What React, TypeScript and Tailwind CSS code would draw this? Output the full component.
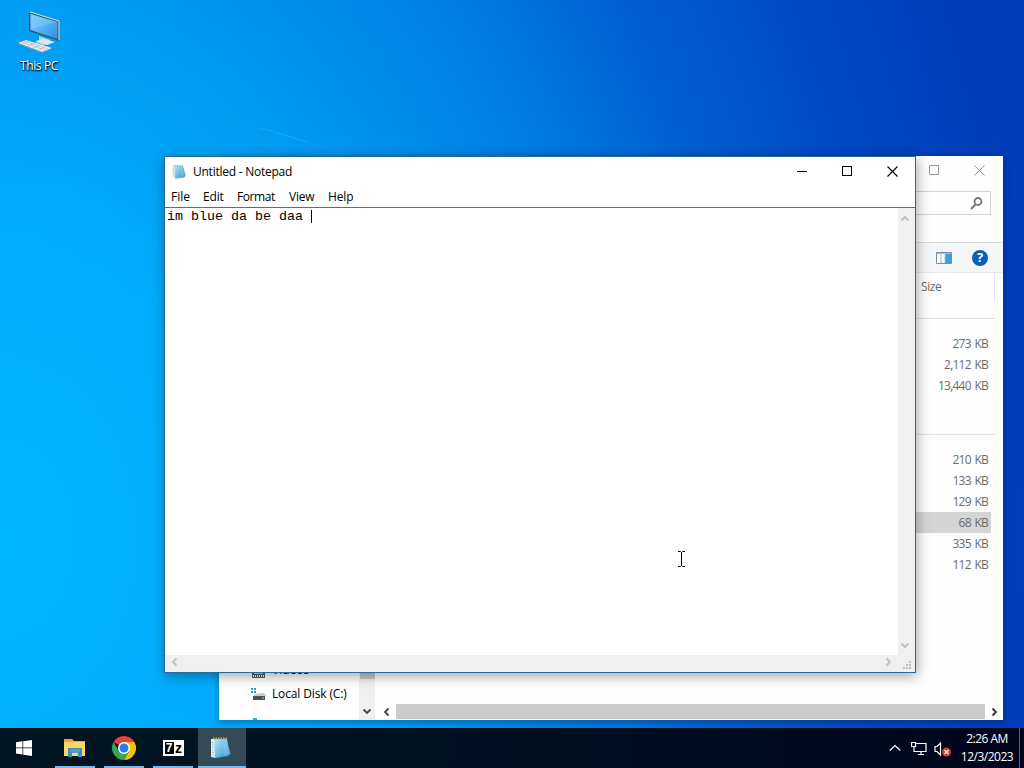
import type { ReactNode } from "react";

const recentSizes = ["273 KB", "2,112 KB", "13,440 KB"];
const olderSizes = ["210 KB", "133 KB", "129 KB", "68 KB", "335 KB", "112 KB"];

function Chevron({ dir, className }: { dir: "up" | "down" | "left" | "right"; className?: string }) {
  const paths = {
    up: "M1.5 6.5 5 3l3.5 3.5",
    down: "M1.5 3.5 5 7l3.5-3.5",
    left: "M6.5 1.5 3 5l3.5 3.5",
    right: "M3.5 1.5 7 5 3.5 8.5",
  };
  return (
    <svg viewBox="0 0 10 10" className={`size-2.5 shrink-0 ${className}`} fill="none" stroke="currentColor" strokeWidth="1.8">
      <path d={paths[dir]} />
    </svg>
  );
}

function NotepadIcon({ className }: { className: string }) {
  return (
    <svg viewBox="0 0 24 24" className={className}>
      <defs>
        <linearGradient id="pad" x1="0" y1="0" x2="1" y2="1">
          <stop offset="0" stopColor="#b5e4f6" />
          <stop offset=".55" stopColor="#68bce4" />
          <stop offset="1" stopColor="#2b83b8" />
        </linearGradient>
      </defs>
      <path d="m18 4 4 14-5 3z" fill="#3a85a8" />
      <path d="M2 3h4l1 19-5-1z" fill="#e8eeee" />
      <path d="M5 3h13l2 17-14 2z" fill="url(#pad)" />
      <path d="m13 3 5 1 3 14-6 2z" fill="#8dd0ef" opacity=".5" />
      <path d="M4 2.500h14" stroke="#c1aa61" strokeWidth="2" strokeDasharray="1.5 1" />
      <path d="m3.500 6 .5 15" stroke="#8fa5ac" strokeDasharray="1 1.5" />
    </svg>
  );
}

function ThisPc() {
  return (
    <div className="flex w-[78px] flex-col items-center pt-2.5">
      <svg viewBox="0 0 48 48" className="size-12">
        <defs>
          <linearGradient id="screen" x1="0" y1="0" x2="1" y2="1">
            <stop offset="0" stopColor="#82cdff" />
            <stop offset=".5" stopColor="#55b2f5" />
            <stop offset="1" stopColor="#2a8fe6" />
          </linearGradient>
        </defs>
        <path d="m24 26 11 4v4l-7 1-8-3 4-2z" fill="#c3d4dd" />
        <path d="m21 31 7-2 12 3-8 3z" fill="#e2e8ea" />
        <path d="M14 2 44 11v20L14 21z" fill="#34566d" />
        <path d="m15 2 29 9v19" fill="none" stroke="#d7dfe2" />
        <path d="m15.500 4 27 8v17l-27-9z" fill="url(#screen)" />
        <path d="m15.500 4 27 8-27 7z" fill="#9edaff" opacity=".28" />
        <path d="m3 33 8-3 26 8-10 4z" fill="#edf0f1" />
        <path d="m3 33 24 9 10-4v1l-10 4-24-9z" fill="#8798a2" />
        <path d="m6 32 24 8M9 31l24 8M8 34l7-3M13 36l7-3M18 38l7-3M23 40l7-3" stroke="#a8b2b7" strokeWidth=".6" />
      </svg>
      <span className="text-[12px] leading-4 tracking-[-0.35px] text-white [text-shadow:1px_1px_2px_#000,0_1px_1px_#000]">This PC</span>
    </div>
  );
}

function DriveIcon() {
  return (
    <svg viewBox="0 0 16 16" className="size-4">
      <path d="M0 2h2v2H0zm3 0h2v2H3zM0 5h2v2H0zm3 0h2v2H3z" fill="#16a6d6" />
      <path d="m4 8 9-1 2 3H3z" fill="#c4cccc" />
      <path d="M2 10h12v4H2z" fill="#4b5354" />
      <path d="M11 12h2" stroke="#7ddd75" />
    </svg>
  );
}

function SizeCell({ value }: { value: string }) {
  return (
    <div className={`flex h-[21px] w-[75px] items-center justify-end pr-[3px] text-[12px] tracking-[-0.75px] text-[#6d6d6d] [word-spacing:1.2px] ${value === "68 KB" ? "bg-[#d5d5d5]" : ""}`}>
      {value}
    </div>
  );
}

function Explorer() {
  return (
    <section className="absolute left-[219px] top-[156px] flex h-[564px] w-[784px] flex-col bg-[#fefefe] shadow-[0_2px_8px_rgba(0,0,0,0.3)]">
      <div className="ml-auto flex h-[516px] w-[87px] flex-col">
        <div className="flex h-[35px] gap-[35px] pl-[13px] pt-[9px] text-[#999]">
          <svg viewBox="0 0 10 10" className="size-2.5" fill="none" stroke="currentColor">
            <path d="M.5.5h9v9h-9z" />
          </svg>
          <svg viewBox="0 0 11 11" className="size-[11px]" fill="none" stroke="currentColor">
            <path d="m.5.5 10 10m0-10-10 10" />
          </svg>
        </div>
        <div className="flex h-6 w-[75px] items-center justify-end border border-l-0 border-[#d5d5d5] pr-[7px]">
          <svg viewBox="0 0 13 13" className="size-[13px]" fill="none" stroke="#777">
            <circle cx="8" cy="4.500" r="3.500" strokeWidth="1.800" />
            <path d="M5.500 7.500 1 12" strokeWidth="2" />
          </svg>
        </div>
        <div className="mt-[27px] flex h-[31px] items-center gap-5 border-y border-t-[#d9d9d9] border-b-[#e8eaec] bg-[#f4f6f7] pl-5">
          <svg viewBox="0 0 16 12" className="h-3 w-4">
            <path d="M.5.5h15v11H.5z" fill="#f9fdff" stroke="#77909d" />
            <path d="M9 1h6v10H9z" fill="#3ba0d8" />
            <path d="M5 1v10M9 1v10M1 1.500h14" stroke="#a8bdc8" />
          </svg>
          <div className="flex size-4 items-center justify-center rounded-full bg-[#0862b9] text-[13px] leading-none font-bold text-white">?</div>
        </div>
        <div className="flex h-[29px] w-[79px] border-r border-[#e5e5e5] pl-[5px] pt-1.5 text-[12px] leading-4 tracking-[-0.45px] text-[#686868]">Size</div>
        <div className="mt-4 h-px w-[79px] bg-[#e2e2e2]" />
        <div className="mt-3.5">
          {recentSizes.map((size) => <SizeCell key={size} value={size} />)}
        </div>
        <div className="mt-[38px] h-px w-[79px] bg-[#e2e2e2]" />
        <div className="mt-3.5">
          {olderSizes.map((size) => <SizeCell key={size} value={size} />)}
        </div>
      </div>
      <div className="flex h-12 shrink-0">
        <div className="flex w-[140px] flex-col pl-8 text-[12px]">
          <div className="flex h-[11px] items-center gap-[5px]">
            <svg viewBox="0 0 16 16" className="size-4 -translate-y-1">
              <path d="M1 3h13v9H1z" fill="#555e62" />
              <path d="M2 10h11" stroke="#eee" strokeWidth="2" strokeDasharray="1 1" />
              <path d="M3 5h9v3H3z" fill="#bfd4dd" />
            </svg>
            <span className="-translate-y-2">Videos</span>
          </div>
          <div className="flex h-[22px] items-center gap-[5px] tracking-[-0.14px]">
            <DriveIcon />
            <span className="whitespace-nowrap">Local Disk (C:)</span>
          </div>
          <div className="ml-0.5 mt-[13px] h-0.5 w-1 shrink-0 bg-[#32a8d7]" />
        </div>
        <div className="flex w-4 flex-col items-center justify-between bg-[#f0f0f0] pb-1">
          <div className="h-[7px] w-[15px] bg-[#c9c9c9]" />
          <Chevron dir="down" className="text-[#444]" />
        </div>
        <div className="mt-auto flex h-[17px] flex-1 items-center gap-1 pl-[7px] pr-1">
          <Chevron dir="left" className="text-[#444]" />
          <div className="h-[15px] flex-1 bg-[#cbcbcb]" />
          <Chevron dir="right" className="text-[#333]" />
        </div>
      </div>
    </section>
  );
}

function Notepad() {
  return (
    <section className="absolute left-[164px] top-[156px] flex h-[517px] w-[752px] flex-col border border-[#286b99] bg-white shadow-[1px_3px_12px_rgba(0,0,0,0.36)]">
      <header className="flex h-[29px] shrink-0 items-center pl-1.5">
        <NotepadIcon className="size-4" />
        <span className="ml-1.5 text-[12px] tracking-[-0.25px]">Untitled - Notepad</span>
        <div className="ml-auto flex items-center gap-[35px] pr-[17px]">
          <div className="h-px w-2.5 bg-black" />
          <div className="size-[10px] -translate-y-px border border-black" />
          <svg viewBox="0 0 11 11" className="size-[11px]" fill="none" stroke="black" strokeWidth="1.100">
            <path d="m.5.5 10 10m0-10-10 10" />
          </svg>
        </div>
      </header>
      <nav className="flex h-[21px] shrink-0 items-center pl-1.5 text-[12px]">
        <span className="w-8">File</span>
        <span className="w-[34px] tracking-[-0.15px]">Edit</span>
        <span className="w-[52px] tracking-[-0.4px]">Format</span>
        <span className="w-[39px] tracking-[-0.2px]">View</span>
        <span className="tracking-[-0.15px]">Help</span>
      </nav>
      <div className="flex min-h-0 flex-1 border-t border-[#287fae]">
        <div className="flex flex-1 items-start pl-0.5 pt-px font-['Liberation_Mono',monospace] text-[13.333px] leading-4">
          <span className="whitespace-pre">im blue da be daa </span>
          <span className="mt-px h-[13px] w-px bg-black" />
        </div>
        <div className="flex w-[17px] flex-col items-center justify-between bg-[#f0f0f0] pb-[5px] pr-[3px] pt-1.5 text-[#bfbfbf]">
          <Chevron dir="up" />
          <Chevron dir="down" />
        </div>
      </div>
      <div className="flex h-[17px] shrink-0 items-center bg-[#f0f0f0] pb-[3px] pl-[5px] pr-[3px] text-[#bfbfbf]">
        <Chevron dir="left" />
        <Chevron dir="right" className="ml-auto" />
        <svg viewBox="0 0 10 10" className="ml-[9px] mt-1.5 size-2.5" fill="#bfbfbf">
          <path d="M7 1h2v2H7zM4 4h2v2H4zM7 4h2v2H7zM1 7h2v2H1zM4 7h2v2H4zM7 7h2v2H7z" />
        </svg>
      </div>
    </section>
  );
}

function TaskButton({ active, children }: { active?: boolean; children: ReactNode }) {
  return (
    <div className={`flex h-10 w-12 flex-col items-center justify-end ${active ? "bg-[#344a57]" : ""}`}>
      <div className="flex flex-1 items-center">{children}</div>
      <div className={`h-0.5 bg-[#76b9ed] ${active ? "w-12" : "w-10"}`} />
    </div>
  );
}

function Taskbar() {
  return (
    <footer className="absolute inset-x-0 bottom-0 flex h-10 bg-linear-to-r from-[#001521] via-[#000f1f] to-[#00061b] text-white">
      <div className="flex w-[51px] items-center pl-4">
        <svg viewBox="0 0 16 16" className="size-4" fill="white">
          <path d="m0 2.200 6.500-.9v6.200H0zm7.200-1L16 0v7.500H7.200zM0 8.200h6.500v6.200L0 13.500zm7.200 0H16V16l-8.800-1.200z" />
        </svg>
      </div>
      <div className="flex gap-px">
        <TaskButton>
          <svg viewBox="0 0 22 20" className="mt-0.5 h-5 w-[22px]">
            <path d="M0 1h8l2 2h11v15H0z" fill="#e8aa36" />
            <path d="M1 4h20v14H0V5z" fill="#ffd467" />
            <path d="M4 10h14v9h-4v-4H8v4H4z" fill="#338fc7" />
            <path d="M6 11h10v3h-2v1H8v-1H6z" fill="#619bb9" />
          </svg>
        </TaskButton>
        <TaskButton>
          <svg viewBox="0 0 24 24" className="mt-0.5 size-6">
            <path d="m12 12-10.390-6A12 12 0 0 1 22.390 6z" fill="#ea4335" />
            <path d="m17.200 15-5.200 9a12 12 0 0 0 10.400-18H12z" fill="#fbbc05" />
            <path d="m6.800 15-5.190-9A12 12 0 0 0 12 24l5.200-9z" fill="#34a853" />
            <circle cx="12" cy="12" r="6" fill="#fff" />
            <circle cx="12" cy="12" r="4.500" fill="#267ce8" />
          </svg>
        </TaskButton>
        <TaskButton>
          <div className="mt-0.5 flex h-4 w-[21px] items-center gap-px bg-white pl-0.5 font-['Liberation_Sans',sans-serif] leading-none font-bold">
            <span className="flex h-3 w-[9px] items-center justify-center bg-black text-[12px] text-white">7</span>
            <span className="flex h-3 w-2 items-end justify-center text-[14px] leading-3 text-black">z</span>
          </div>
        </TaskButton>
        <TaskButton active>
          <NotepadIcon className="-ml-0.5 mt-0.5 size-6" />
        </TaskButton>
      </div>
      <div className="ml-auto flex items-center">
        <svg viewBox="0 0 12 8" className="h-2 w-3" fill="none" stroke="currentColor" strokeWidth="1.200">
          <path d="m.7 6.500 5.300-5 5.300 5" />
        </svg>
        <svg viewBox="0 0 16 14" className="ml-2.5 mt-0.5 h-3.5 w-4" fill="none" stroke="currentColor" strokeWidth="1.200">
          <path d="M4.500 1.500H15v8H3V5M7 12.500h6M10 10v2M.5.500h4v4h-4z" />
        </svg>
        <svg viewBox="0 0 18 16" className="ml-[7px] mt-1 h-4 w-[18px]" fill="none">
          <path d="M1 4.500h2l3.500-3.500v12L3 9.500H1z" stroke="white" strokeWidth="1.200" />
          <circle cx="12.500" cy="10" r="4.500" fill="#ce3b37" />
          <path d="m10.500 8 4 4m0-4-4 4" stroke="white" strokeWidth="1.200" />
        </svg>
        <div className="ml-2 flex w-[54px] flex-col text-center text-[12px] leading-[18px] tracking-[-0.5px] whitespace-nowrap">
          <span>2:26 AM</span>
          <span>12/3/2023</span>
        </div>
        <div className="ml-[5px] h-full w-[5px] border-l border-[#59616d]" />
      </div>
    </footer>
  );
}

export default function App() {
  return (
    <main className="relative h-screen w-screen overflow-hidden bg-[radial-gradient(1030px_1400px_at_0_540px,#00b7ff_0%,#00acfd_23%,#009df3_38%,#008cea_50%,#0078e0_61%,#0060d2_72%,#0049c5_86%,#003cb8_101%)] font-['Open_Sans',sans-serif] text-black">
      <svg viewBox="0 0 1024 768" className="absolute inset-0 size-full" fill="none">
        <path d="m115 88 210 59" stroke="#6bcaff" strokeWidth="1" opacity=".07" />
        <path d="m262 128 45 14" stroke="#8bd5ff" strokeWidth="1" opacity=".2" />
      </svg>
      <ThisPc />
      <Explorer />
      <Notepad />
      <Taskbar />
      {/* Text cursor */}
      <svg viewBox="0 0 7 16" className="absolute left-[678px] top-[551px] h-4 w-[7px]" fill="none" stroke="black">
        <path d="M0 .5h2.500l1 1 1-1H7M3.500 1v14M0 15.500h2.500l1-1 1 1H7" />
      </svg>
    </main>
  );
}
